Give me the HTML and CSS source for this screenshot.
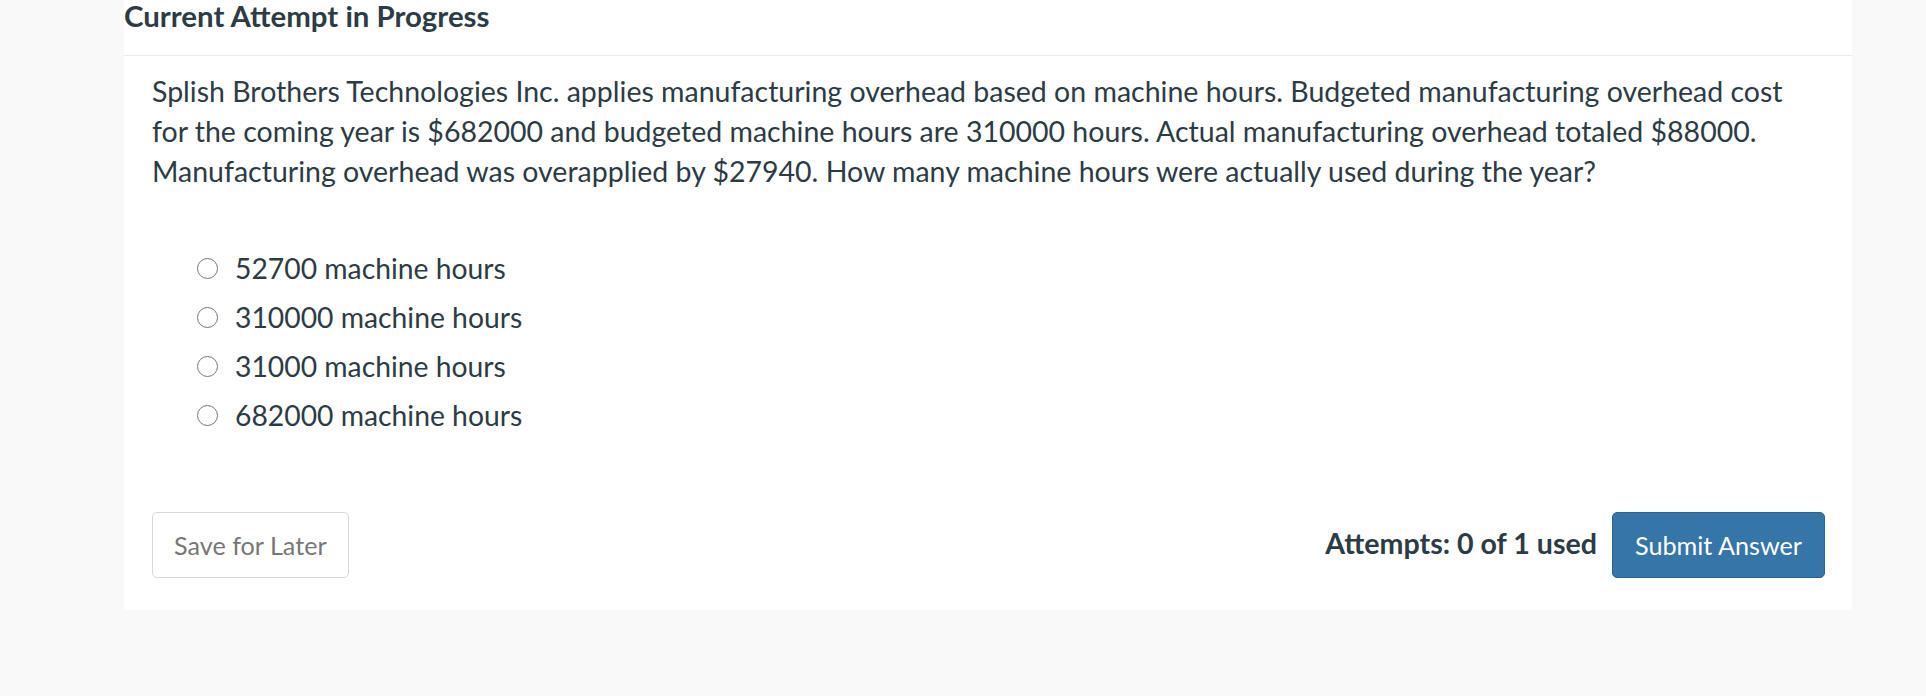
FILE: index.html
```html
<!DOCTYPE html>
<html lang="en">
<head>
<meta charset="utf-8">
<title>Current Attempt in Progress</title>
<link rel="stylesheet" href="styles.css">
</head>
<body>
<div class="panel">
  <div class="panel-header">
    <h2 class="title">Current Attempt in Progress</h2>
  </div>
  <div class="question">
    <p class="question-text">Splish Brothers Technologies Inc. applies manufacturing overhead based on machine hours. Budgeted manufacturing overhead cost for the coming year is $682000 and budgeted machine hours are 310000 hours. Actual manufacturing overhead totaled $88000. Manufacturing overhead was overapplied by $27940. How many machine hours were actually used during the year?</p>
    <ul class="options">
      <li class="option"><span class="radio"></span><span class="option-label">52700 machine hours</span></li>
      <li class="option"><span class="radio"></span><span class="option-label">310000 machine hours</span></li>
      <li class="option"><span class="radio"></span><span class="option-label">31000 machine hours</span></li>
      <li class="option"><span class="radio"></span><span class="option-label">682000 machine hours</span></li>
    </ul>
  </div>
  <div class="panel-footer">
    <button class="btn btn-default">Save for Later</button>
    <div class="submit-group">
      <span class="attempts">Attempts: 0 of 1 used</span>
      <button class="btn btn-primary">Submit Answer</button>
    </div>
  </div>
</div>
</body>
</html>
```

FILE: styles.css
```css
* { box-sizing: border-box; }

html, body {
  margin: 0;
  padding: 0;
  background: #f9f9f9;
}

body {
  font-family: Lato, "Open Sans", "Liberation Sans", sans-serif;
  color: #2d3b45;
}

.panel {
  margin-left: 124px;
  width: 1728px;
  background: #ffffff;
  padding-bottom: 32px;
}

.panel-header {
  border-bottom: 1px solid #e9ebed;
  padding-bottom: 23px;
}

.title {
  margin: 0;
  font-size: 29.4px;
  line-height: 32px;
  font-weight: 700;
  color: #2d3b45;
}

.question {
  padding: 15px 28px 0 28px;
}

.question-text {
  margin: 0;
  font-size: 28.5px;
  line-height: 40px;
  color: #2d3b45;
}

.options {
  list-style: none;
  margin: 53px 0 0 0;
  padding: 0 0 0 45px;
}

.option {
  display: flex;
  align-items: center;
  height: 49px;
  font-size: 28.3px;
  line-height: 49px;
}

.radio {
  width: 21px;
  height: 21px;
  border: 1.6px solid #767676;
  border-radius: 50%;
  margin-right: 17px;
  flex: none;
  margin-top: -1px;
}

.panel-footer {
  display: flex;
  justify-content: space-between;
  align-items: center;
  margin-top: 72px;
  padding: 0 27px 0 28px;
}

.submit-group {
  display: flex;
  align-items: center;
  gap: 15px;
}

.attempts {
  font-weight: 700;
  font-size: 28.6px;
  color: #2d3b45;
  margin-top: -4px;
}

.btn {
  font-family: Lato, "Open Sans", "Liberation Sans", sans-serif;
  font-size: 25.2px;
  height: 66px;
  border-radius: 5px;
  cursor: pointer;
}

.btn-default {
  background: #ffffff;
  border: 1px solid #d7d7d7;
  color: #777777;
  padding: 0 21px;
}

.btn-primary {
  background: #3575a8;
  border: 1px solid #2b6594;
  color: #ffffff;
  padding: 0 22px;
}
```
